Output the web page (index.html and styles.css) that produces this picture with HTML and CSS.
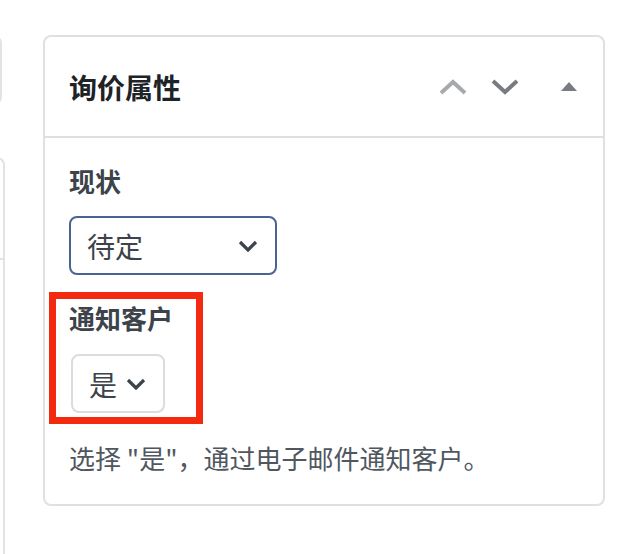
FILE: index.html
```html
<!DOCTYPE html>
<html>
<head>
<meta charset="utf-8"/>
<link rel="stylesheet" href="styles.css">
<title>询价属性</title>
</head>
<body>
<div class="wrap">
  <div class="side">
    <div class="side-box side-top"></div>
    <div class="side-box side-bottom">
      <div class="side-row"></div>
    </div>
  </div>

  <div class="postbox">
    <div class="postbox-header">
      <h2>询价属性</h2>
      <span class="hbtn up">
        <svg width="28" height="16" viewBox="0 0 28 16"><polyline points="2,14 14,3 26,14" fill="none" stroke="#a7aaad" stroke-width="4"/></svg>
      </span>
      <span class="hbtn down">
        <svg width="28" height="16" viewBox="0 0 28 16"><polyline points="2,2 14,13 26,2" fill="none" stroke="#787c82" stroke-width="4"/></svg>
      </span>
      <span class="hbtn toggle">
        <svg width="16" height="9" viewBox="0 0 16 9"><polygon points="8,0 16,9 0,9" fill="#787c82"/></svg>
      </span>
    </div>

    <div class="inside">
      <div class="field">
        <label class="field-label">现状</label>
        <div class="select select-status">
          <span>待定</span>
          <svg width="20" height="12" viewBox="0 0 20 12"><polyline points="2,2 10,10 18,2" fill="none" stroke="#3c434a" stroke-width="3.2"/></svg>
        </div>
      </div>

      <div class="field marked">
        <label class="field-label">通知客户</label>
        <div class="select select-notify">
          <span>是</span>
          <svg width="20" height="12" viewBox="0 0 20 12"><polyline points="2,2 10,10 18,2" fill="none" stroke="#3c434a" stroke-width="3.2"/></svg>
        </div>
      </div>

      <p class="description">选择 "是"，通过电子邮件通知客户。</p>
    </div>
  </div>
</div>
</body>
</html>
```

FILE: styles.css
```css
html, body {
  margin: 0;
  height: 554px;
  overflow: hidden;
  background-color: #ffffff;
  font-family: "Noto Sans CJK SC", "Noto Sans", sans-serif;
}

.wrap {
  display: flex;
  align-items: flex-start;
  padding-top: 35px;
}

/* neighbouring boxes cut off at the left edge */
.side {
  width: 6px;
  flex: none;
  display: flex;
  flex-direction: column;
}

.side-box {
  width: 40px;
  box-sizing: border-box;
  border: 2px solid #e3e3e5;
  border-radius: 8px;
}

.side-top {
  height: 70px;
  margin-left: -38px;
}

.side-bottom {
  height: 420px;
  margin-top: 52px;
  margin-left: -35px;
  border-bottom: none;
  border-radius: 8px 8px 0 0;
}

.side-row {
  height: 99px;
  border-bottom: 2px solid #e3e3e5;
}

/* main box */
.postbox {
  width: 562px;
  margin-left: 37px;
  box-sizing: border-box;
  border: 2px solid #e0e0e2;
  border-radius: 8px;
}

.postbox-header {
  display: flex;
  align-items: center;
  height: 101px;
  box-sizing: border-box;
  padding-left: 24px;
  border-bottom: 2px solid #e0e0e2;
}

.postbox-header h2 {
  flex: 1;
  margin: 0;
  font-size: 28px;
  font-weight: bold;
  color: #1d2327;
}

.hbtn {
  width: 52px;
  display: flex;
  justify-content: center;
  align-items: center;
}

.hbtn.toggle {
  width: 68px;
  margin-left: 4px;
}

.inside {
  padding: 25px 24px 28px 24px;
}

.field-label {
  display: block;
  font-size: 26px;
  line-height: 36px;
  font-weight: bold;
  color: #3c434a;
}

.select {
  display: flex;
  align-items: center;
  justify-content: space-between;
  height: 59px;
  box-sizing: border-box;
  margin-top: 17px;
  padding: 0 17px 0 16px;
  border: 2px solid #dcdcde;
  border-radius: 8px;
  font-size: 28px;
  color: #3c434a;
}

.select-status {
  width: 208px;
  border-color: #4a6491;
}

.select-notify {
  width: 94px;
  margin-left: 2px;
}

/* red annotation frame */
.marked {
  width: 154px;
  box-sizing: border-box;
  margin: 17px 0 0 -20px;
  padding: 1px 0 4px 13px;
  border: 7px solid #f32a10;
}

.marked .select {
  margin-top: 18px;
}

.description {
  margin: 16px 0 0 0;
  font-size: 26px;
  line-height: 36px;
  color: #50575e;
}
```
